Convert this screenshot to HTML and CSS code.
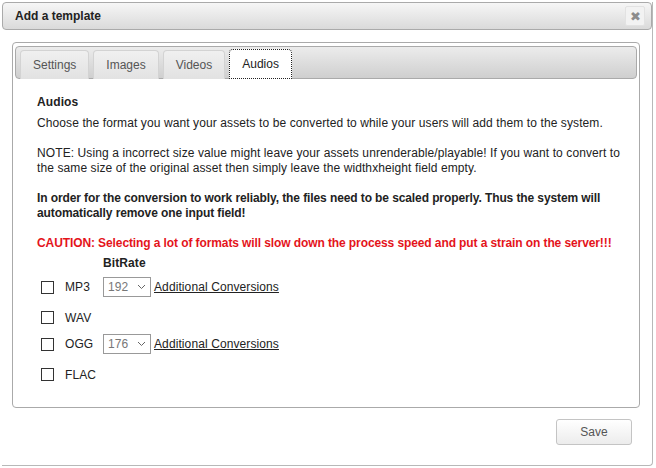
FILE: index.html
```html
<!DOCTYPE html>
<html>
<head>
<meta charset="utf-8">
<link rel="stylesheet" href="styles.css">
</head>
<body>
<div class="dialog">
  <div class="titlebar">
    <span class="title">Add a template</span>
    <span class="close">✖</span>
  </div>
  <div class="dialog-body">
    <div class="panel">
      <div class="tabbar">
        <div class="tab">Settings</div>
        <div class="tab">Images</div>
        <div class="tab">Videos</div>
        <div class="tab active">Audios</div>
      </div>
      <div class="tabcontent">
        <div class="heading">Audios</div>
        <p class="text">Choose the format you want your assets to be converted to while your users will add them to the system.</p>
        <p class="text">NOTE: Using a incorrect size value might leave your assets unrenderable/playable! If you want to convert to the same size of the original asset then simply leave the widthxheight field empty.</p>
        <p class="text bold">In order for the conversion to work reliably, the files need to be scaled properly. Thus the system will automatically remove one input field!</p>
        <p class="text caution">CAUTION: Selecting a lot of formats will slow down the process speed and put a strain on the server!!!</p>
        <div class="bitrate-head">BitRate</div>
        <div class="row tall">
          <span class="cb"></span><span class="fmt">MP3</span>
          <span class="select">192<svg class="chev" width="9" height="6" viewBox="0 0 9 6"><path d="M1 1l3.5 3.5L8 1" fill="none" stroke="#666" stroke-width="1"/></svg></span>
          <a class="link">Additional Conversions</a>
        </div>
        <div class="row short">
          <span class="cb"></span><span class="fmt">WAV</span>
        </div>
        <div class="row tall">
          <span class="cb"></span><span class="fmt">OGG</span>
          <span class="select">176<svg class="chev" width="9" height="6" viewBox="0 0 9 6"><path d="M1 1l3.5 3.5L8 1" fill="none" stroke="#666" stroke-width="1"/></svg></span>
          <a class="link">Additional Conversions</a>
        </div>
        <div class="row short">
          <span class="cb"></span><span class="fmt">FLAC</span>
        </div>
      </div>
    </div>
    <div class="footer">
      <button class="save">Save</button>
    </div>
  </div>
</div>
</body>
</html>
```

FILE: styles.css
```css
html, body {
  margin: 0;
  padding: 0;
  background: #fff;
}
body {
  font-family: "Liberation Sans", Arial, sans-serif;
  font-size: 12px;
  color: #222;
}
.dialog {
  margin: 2px 3px 0 2px;
  height: 464px;
  border-right: 1px solid #b8b8b8;
  border-bottom: 1px solid #b8b8b8;
  border-radius: 0 0 4px 0;
  box-sizing: border-box;
}
.titlebar {
  height: 28px;
  box-sizing: border-box;
  border: 1px solid #aaa;
  border-radius: 4px;
  background: linear-gradient(#f6f6f6, #dadada);
  display: flex;
  align-items: center;
  justify-content: space-between;
  padding: 0 6px 0 12px;
}
.title {
  font-weight: bold;
  font-size: 12px;
  color: #222;
}
.close {
  width: 20px;
  height: 20px;
  background: #f2f2f2;
  border: 1px solid #e2e2e2;
  border-radius: 2px;
  box-sizing: border-box;
  display: flex;
  align-items: center;
  justify-content: center;
  font-size: 13px;
  color: #8c8c8c;
}
.dialog-body {
  padding: 12px 12px 0 10px;
}
.panel {
  border: 1px solid #aaa;
  border-radius: 4px;
  padding: 3px 2px;
  height: 366px;
  box-sizing: border-box;
}
.tabbar {
  height: 33px;
  box-sizing: border-box;
  border: 1px solid #aaa;
  border-radius: 4px;
  background: linear-gradient(#ececec, #cfcfcf);
  display: flex;
  align-items: flex-end;
  gap: 4px;
  padding: 0 0 0 4px;
}
.tab {
  height: 29px;
  box-sizing: border-box;
  border: 1px solid #d3d3d3;
  border-bottom: none;
  border-radius: 4px 4px 0 0;
  background: linear-gradient(#f0f0f0, #e2e2e2);
  color: #555;
  padding: 7px 12px 0;
  font-size: 12px;
  margin-bottom: -1px;
}
.tab.active {
  background: #fff;
  color: #222;
  border: 1px dotted #222;
  height: 30px;
  padding-top: 7px;
}
.tabcontent {
  padding: 16px 0 0 22px;
  letter-spacing: 0.1px;
}
.heading {
  font-weight: bold;
  line-height: 15px;
  margin-bottom: 6px;
}
.text {
  margin: 0 0 15px;
  line-height: 15px;
}
.bold {
  font-weight: bold;
  letter-spacing: -0.1px;
}
.caution {
  color: #e4141b;
  font-weight: bold;
  letter-spacing: -0.1px;
  margin-bottom: 5px;
}
.bitrate-head {
  font-weight: bold;
  padding-left: 66px;
  line-height: 15px;
  margin-bottom: 5px;
}
.row {
  display: flex;
  align-items: center;
  padding-left: 4px;
}
.row.tall {
  height: 22px;
  margin-bottom: 12px;
}
.row.short {
  height: 15px;
  margin-bottom: 8px;
}
.cb {
  width: 13px;
  height: 13px;
  box-sizing: border-box;
  border: 1px solid #333;
  margin-right: 11px;
}
.fmt {
  width: 38px;
}
.select {
  width: 48px;
  height: 20px;
  box-sizing: border-box;
  border: 1px solid #999;
  color: #777;
  display: flex;
  align-items: center;
  justify-content: space-between;
  padding: 0 4px 0 4px;
  font-size: 12px;
  margin-right: 3px;
}
.chev {
  display: block;
}
.link {
  color: #222;
  text-decoration: underline;
}
.footer {
  display: flex;
  justify-content: flex-end;
  padding: 11px 8px 0 0;
}
.save {
  width: 76px;
  height: 26px;
  border: 1px solid #c4c4c4;
  border-radius: 3px;
  background: linear-gradient(#fff, #ececec);
  font-family: "Liberation Sans", Arial, sans-serif;
  font-size: 12px;
  color: #555;
}
```
